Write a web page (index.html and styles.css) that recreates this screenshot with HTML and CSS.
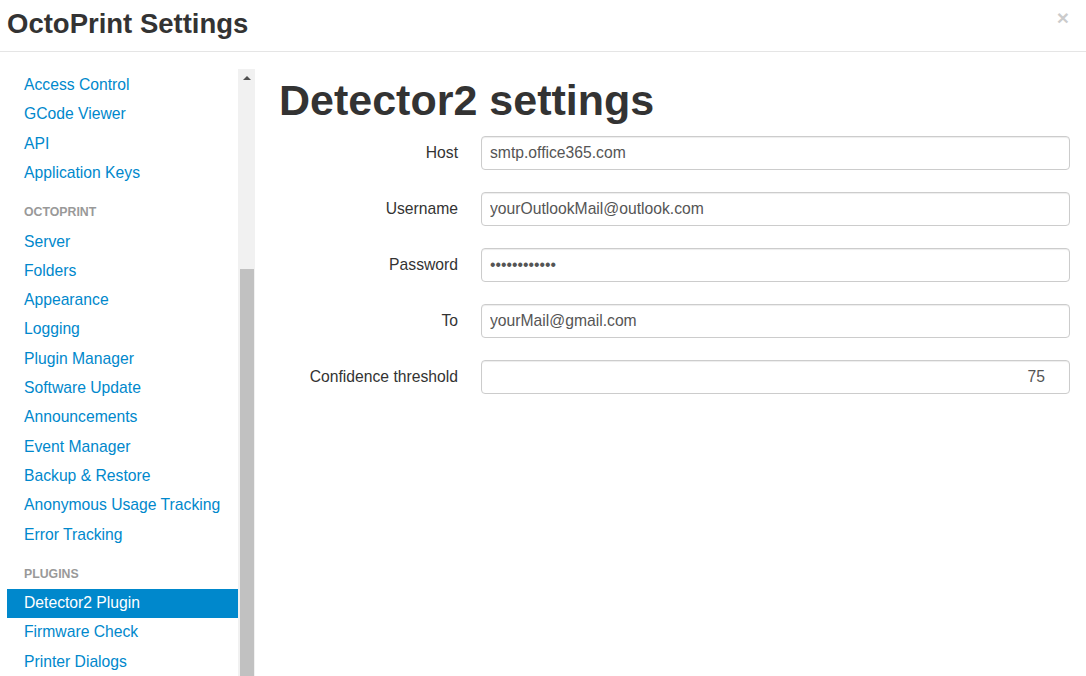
FILE: index.html
```html
<!DOCTYPE html>
<html>
<head>
<meta charset="utf-8">
<title>OctoPrint Settings</title>
<link rel="stylesheet" href="styles.css">
</head>
<body>
<div class="modal">
  <div class="modal-header">
    <h3 class="modal-title">OctoPrint Settings</h3>
    <span class="close">&times;</span>
  </div>
  <div class="modal-body">
    <div class="sidebar">
      <ul class="nav-list">
        <li><a href="#">Access Control</a></li>
        <li><a href="#">GCode Viewer</a></li>
        <li><a href="#">API</a></li>
        <li><a href="#">Application Keys</a></li>
        <li class="nav-header">OctoPrint</li>
        <li><a href="#">Server</a></li>
        <li><a href="#">Folders</a></li>
        <li><a href="#">Appearance</a></li>
        <li><a href="#">Logging</a></li>
        <li><a href="#">Plugin Manager</a></li>
        <li><a href="#">Software Update</a></li>
        <li><a href="#">Announcements</a></li>
        <li><a href="#">Event Manager</a></li>
        <li><a href="#">Backup &amp; Restore</a></li>
        <li><a href="#">Anonymous Usage Tracking</a></li>
        <li><a href="#">Error Tracking</a></li>
        <li class="nav-header">Plugins</li>
        <li class="active"><a href="#">Detector2 Plugin</a></li>
        <li><a href="#">Firmware Check</a></li>
        <li><a href="#">Printer Dialogs</a></li>
      </ul>
      <div class="scrollbar">
        <div class="scroll-button"><span class="arrow-up"></span></div>
        <div class="scroll-thumb"></div>
      </div>
    </div>
    <div class="content">
      <h1 class="page-title">Detector2 settings</h1>
      <form class="form-horizontal">
        <div class="control-group">
          <label class="control-label">Host</label>
          <input class="field" type="text" value="smtp.office365.com">
        </div>
        <div class="control-group">
          <label class="control-label">Username</label>
          <input class="field" type="text" value="yourOutlookMail@outlook.com">
        </div>
        <div class="control-group">
          <label class="control-label">Password</label>
          <input class="field" type="password" value="abcdefghijkl">
        </div>
        <div class="control-group">
          <label class="control-label">To</label>
          <input class="field" type="text" value="yourMail@gmail.com">
        </div>
        <div class="control-group">
          <label class="control-label">Confidence threshold</label>
          <input class="field field-num" type="text" value="75">
        </div>
      </form>
    </div>
  </div>
</div>
</body>
</html>
```
FILE: styles.css
```css
html, body {
  margin: 0;
  padding: 0;
  height: 676px;
  overflow: hidden;
  background: #fff;
}
body {
  font-family: "Liberation Sans", Arial, Helvetica, sans-serif;
  font-size: 15.7px;
  line-height: 22.4px;
  color: #333;
}
.modal-header {
  display: flex;
  justify-content: space-between;
  align-items: flex-start;
  padding: 7px 17px 10px 7px;
  border-bottom: 1px solid #e5e5e5;
}
.modal-title {
  margin: 0;
  font-size: 27.5px;
  line-height: 34px;
  font-weight: bold;
  color: #333;
}
.close {
  margin-top: 1px;
  font-size: 21px;
  line-height: 20px;
  font-weight: bold;
  color: #000;
  opacity: 0.2;
}
.modal-body {
  display: flex;
  padding: 17px 16px 0 7px;
}
.sidebar {
  display: flex;
  width: 248px;
  height: 640px;
  flex: none;
}
.nav-list {
  list-style: none;
  margin: 0;
  padding: 1.6px 0 0;
  width: 231px;
}
.nav-list li a {
  display: block;
  padding: 3.5px 17px;
  line-height: 22.3px;
  color: #0088cc;
  text-decoration: none;
}
.nav-list li.active a {
  background: #0088cc;
  color: #fff;
}
.nav-header {
  margin-top: 10px;
  padding: 3.5px 17px;
  line-height: 22.3px;
  font-size: 12.3px;
  font-weight: bold;
  text-transform: uppercase;
  color: #999;
  text-shadow: 0 1px 0 rgba(255,255,255,0.5);
}
.scrollbar {
  width: 17px;
  display: flex;
  flex-direction: column;
  background: #f1f1f1;
}
.scroll-button {
  height: 17px;
  display: flex;
  justify-content: center;
  padding-top: 7px;
  box-sizing: border-box;
}
.arrow-up {
  width: 0;
  height: 0;
  border-left: 4px solid transparent;
  border-right: 4px solid transparent;
  border-bottom: 4px solid #505050;
}
.scroll-thumb {
  margin: 183px 1px 0 2px;
  flex: 1;
  background: #c1c1c1;
}
.content {
  flex: 1;
  padding-left: 24px;
}
.page-title {
  margin: 9px 0 13px;
  font-size: 43px;
  line-height: 45px;
  font-weight: bold;
  color: #333;
}
.form-horizontal {
  margin: 0;
}
.control-group {
  display: flex;
  margin-bottom: 22px;
}
.control-label {
  width: 179px;
  flex: none;
  text-align: right;
  padding-top: 5.5px;
  margin-right: 23px;
  line-height: 22.4px;
  color: #333;
}
.field {
  flex: 1;
  min-width: 0;
  height: 34px;
  box-sizing: border-box;
  margin: 0;
  padding: 4px 8px;
  border: 1px solid #ccc;
  border-radius: 4px;
  box-shadow: inset 0 1px 1px rgba(0,0,0,0.075);
  font-family: "Liberation Sans", Arial, Helvetica, sans-serif;
  font-size: 15.7px;
  line-height: 22.4px;
  color: #555;
  background: #fff;
  outline: none;
}
.field-num {
  text-align: right;
  padding-right: 24px;
}
```
